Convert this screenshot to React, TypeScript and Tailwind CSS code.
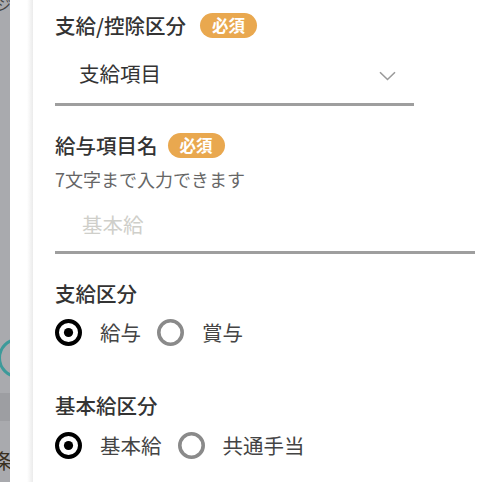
import React from "react";

const font = { fontFamily: '"Noto Sans CJK JP", "Noto Sans", sans-serif' };

function Badge({ gap }: { gap: string }) {
  return (
    <span className={`${gap} inline-flex h-[25px] w-[57px] items-center justify-center rounded-full bg-[#e9a84f] text-[16.5px] font-bold leading-none text-white`}>
      必須
    </span>
  );
}

function Radio({ checked }: { checked: boolean }) {
  return (
    <svg width="27" height="27" viewBox="0 0 27 27" className="shrink-0">
      {checked ? (
        <>
          <circle cx="13.5" cy="13.5" r="11.5" fill="none" stroke="#000" strokeWidth="4" />
          <circle cx="13.5" cy="13.5" r="4.6" fill="#000" />
        </>
      ) : (
        <circle cx="13.5" cy="13.5" r="11.7" fill="none" stroke="#8a8a8a" strokeWidth="3.6" />
      )}
    </svg>
  );
}

function Label({ children, badge }: { children: React.ReactNode; badge?: string }) {
  return (
    <div className="flex h-[26px] items-center">
      <span className="text-[20.5px] font-medium leading-none text-[#333]">{children}</span>
      {badge && <Badge gap={badge} />}
    </div>
  );
}

export default function App() {
  return (
    <div className="flex h-[482px] w-[495px] overflow-hidden bg-white" style={font}>
      {/* dimmed background page */}
      <div className="relative h-full w-[10px] shrink-0 overflow-hidden bg-[#a9aaae]">
        <div className="absolute left-[-3px] top-[-6px] text-[14px] text-[#444]">ジ</div>
        <div className="absolute left-[-2px] top-[338px] h-[40px] w-[40px] rounded-full border-[3px] border-[#3d9a9a]" />
        <div className="absolute left-0 top-[393px] h-[28px] w-[10px] bg-[#9d9ea2]" />
        <div className="absolute left-[-6px] top-[446px] text-[20px] text-[#3a3020]">条</div>
      </div>
      <div className="h-full w-[17px] shrink-0 bg-white" />
      <div className="h-full w-[6px] shrink-0 bg-gradient-to-r from-white to-[#ebebeb]" />
      <div className="flex flex-1 flex-col pl-[22px]">
        <div className="mt-[12px]">
          <Label badge="ml-[14px]">支給/控除区分</Label>
        </div>
        <div className="flex w-[359px] items-center border-b-[3px] border-[#9e9e9e] pb-[18px] pl-[24px] pr-[18px] pt-[23px]">
          <span className="flex-1 text-[20.5px] leading-[24px] text-[#333]">支給項目</span>
          <svg width="17" height="10" viewBox="0 0 17 10" className="mt-[6px]">
            <path d="M1 1.2 L8.5 8.5 L16 1.2" fill="none" stroke="#9a9a9a" strokeWidth="1.6" />
          </svg>
        </div>

        <div className="mt-[26px]">
          <Label badge="ml-[10px]">給与項目名</Label>
        </div>
        <div className="mt-[9px] text-[18px] leading-[24px] text-[#666]">7文字まで入力できます</div>
        <div className="w-[420px] border-b-[3px] border-[#9e9e9e] pb-[15px] pl-[27px] pt-[21px]">
          <span className="block text-[20.5px] leading-[24px] text-[#cfcfca]">基本給</span>
        </div>

        <div className="mt-[26px]">
          <Label>支給区分</Label>
        </div>
        <div className="mt-[12px] flex h-[28px] items-center">
          <Radio checked />
          <span className="ml-[18px] text-[20.5px] leading-none text-[#444]">給与</span>
          <span className="ml-[16px]" />
          <Radio checked={false} />
          <span className="ml-[18px] text-[20.5px] leading-none text-[#444]">賞与</span>
        </div>

        <div className="mt-[46px]">
          <Label>基本給区分</Label>
        </div>
        <div className="mt-[13px] flex h-[28px] items-center">
          <Radio checked />
          <span className="ml-[18px] text-[20.5px] leading-none text-[#444]">基本給</span>
          <span className="ml-[16px]" />
          <Radio checked={false} />
          <span className="ml-[18px] text-[20.5px] leading-none text-[#444]">共通手当</span>
        </div>
      </div>
    </div>
  );
}
